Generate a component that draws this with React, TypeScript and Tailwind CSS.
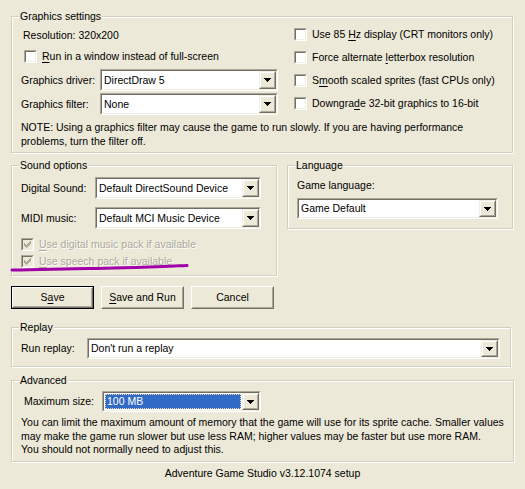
import React from "react";

/** Underlined access-key letter, as Windows draws it */
function Key({ children }: { children: React.ReactNode }) {
  return <span className="underline decoration-1 underline-offset-[2px]">{children}</span>;
}

/** Etched group box with its caption cut into the top edge */
function Group({
  title,
  className,
  children,
}: {
  title: string;
  className?: string;
  children: React.ReactNode;
}) {
  return (
    <fieldset
      className={`border border-[#D0D0BF] px-[9px] shadow-[1px_1px_0_#fff,inset_1px_1px_0_#fff] ${className ?? ""}`}
    >
      <legend className="-ml-[2px] bg-[#ECE9D8] px-[1px] leading-[13px]">{title}</legend>
      {children}
    </fieldset>
  );
}

/** Classic 13x13 sunken checkbox */
function CheckBox({ checked, disabled }: { checked?: boolean; disabled?: boolean }) {
  return (
    <span className="inline-block h-[13px] w-[13px] shrink-0 border border-t-[#ACA899] border-l-[#ACA899] border-b-white border-r-white">
      <span
        className={[
          "flex h-full w-full items-center justify-center border border-t-[#716F64] border-l-[#716F64] border-b-[#F1EFE2] border-r-[#F1EFE2]",
          disabled ? "bg-[#ECE9D8]" : "bg-white",
        ].join(" ")}
      >
        {checked && (
          <svg width="7" height="7" viewBox="0 0 7 7" shapeRendering="crispEdges">
            <path
              d="M0 2h1v3H0zM1 3h1v3H1zM2 4h1v3H2zM3 3h1v3H3zM4 2h1v3H4zM5 1h1v3H5zM6 0h1v3H6z"
              fill={disabled ? "#ACA899" : "#000"}
            />
          </svg>
        )}
      </span>
    </span>
  );
}

function CheckRow({
  children,
  checked,
  disabled,
  className,
}: {
  children: React.ReactNode;
  checked?: boolean;
  disabled?: boolean;
  className?: string;
}) {
  return (
    <div className={`flex h-[13px] items-center gap-[5px] whitespace-nowrap ${className ?? ""}`}>
      <CheckBox checked={checked} disabled={disabled} />
      <span className={disabled ? "text-[#ACA899] [text-shadow:1px_1px_0_#fff]" : ""}>{children}</span>
    </div>
  );
}

/** Raised button with the small black arrow */
function DropButton() {
  return (
    <div className="h-full w-[17px] shrink-0 border border-t-[#F1EFE2] border-l-[#F1EFE2] border-b-[#716F64] border-r-[#716F64]">
      <div className="flex h-full w-full items-center justify-center border border-t-white border-l-white border-b-[#ACA899] border-r-[#ACA899] bg-[#ECE9D8]">
        <svg width="7" height="4" viewBox="0 0 7 4" shapeRendering="crispEdges">
          <path d="M0 0h7v1H0zM1 1h5v1H1zM2 2h3v1H2zM3 3h1v1H3z" fill="#000" />
        </svg>
      </div>
    </div>
  );
}

function Combo({
  value,
  className,
  selected,
}: {
  value: string;
  className?: string;
  selected?: boolean;
}) {
  return (
    <div
      className={`shrink-0 border border-t-[#ACA899] border-l-[#ACA899] border-b-white border-r-white ${className ?? ""}`}
    >
      <div className="flex h-full border border-t-[#716F64] border-l-[#716F64] border-b-[#F1EFE2] border-r-[#F1EFE2] bg-white">
        {selected ? (
          <div className="flex min-w-0 flex-1 p-[1px]">
            <div className="flex flex-1 items-center border border-dotted border-[#E6DDB0] bg-[#316AC5] pl-[1px] text-white">
              {value}
            </div>
          </div>
        ) : (
          <div className="flex min-w-0 flex-1 items-center whitespace-nowrap pl-[2px]">{value}</div>
        )}
        <DropButton />
      </div>
    </div>
  );
}

function Button({ children, isDefault }: { children: React.ReactNode; isDefault?: boolean }) {
  return (
    <div className={`h-[23px] w-[83px] ${isDefault ? "border border-black" : ""}`}>
      <div className="h-full w-full border border-t-white border-l-white border-b-[#716F64] border-r-[#716F64]">
        <div className="flex h-full w-full items-center justify-center border border-transparent border-b-[#ACA899] border-r-[#ACA899]">
          {children}
        </div>
      </div>
    </div>
  );
}

export default function App() {
  return (
    <div className="relative h-[489px] w-[525px] overflow-hidden bg-[#ECE9D8] font-['Liberation_Sans',Arial,sans-serif] text-[10.5px] leading-[13px] text-black">
      <div className="pl-[11px] pt-[10px]">
        {/* Graphics settings */}
        <Group title="Graphics settings" className="w-[502px] pb-[4px]">
          <div className="flex">
            <div className="w-[273px]">
              <div className="mt-[6px] pl-[2px]">Resolution: 320x200</div>
              <CheckRow className="mt-[8px] pl-[3px]">
                <Key>R</Key>un in a window instead of full-screen
              </CheckRow>
              <div className="mt-[6px] flex items-center">
                <span className="w-[79px]">Graphics driver:</span>
                <Combo value="DirectDraw 5" className="h-[22px] w-[178px]" />
              </div>
              <div className="mt-[2px] flex items-center">
                <span className="w-[79px]">Graphics filter:</span>
                <Combo value="None" className="h-[22px] w-[178px]" />
              </div>
            </div>
            <div className="flex flex-col gap-[10px] pt-[5px]">
              <CheckRow>
                Use 85 <Key>H</Key>z display (CRT monitors only)
              </CheckRow>
              <CheckRow>
                Force alternate <Key>l</Key>etterbox resolution
              </CheckRow>
              <CheckRow>
                S<Key>m</Key>ooth scaled sprites (fast CPUs only)
              </CheckRow>
              <CheckRow>
                Downgra<Key>d</Key>e 32-bit graphics to 16-bit
              </CheckRow>
            </div>
          </div>
          <p className="mt-[5px] whitespace-nowrap leading-[14px]">
            NOTE: Using a graphics filter may cause the game to run slowly. If you are having performance
            <br />
            problems, turn the filter off.
          </p>
        </Group>

        {/* Sound + Language */}
        <div className="mt-[6px] flex items-start gap-[10px]">
          <Group title="Sound options" className="w-[266px] pb-[7px]">
            <div className="mt-[5px] flex items-center">
              <span className="w-[74px]">Digital Sound:</span>
              <Combo value="Default DirectSound Device" className="h-[22px] w-[166px]" />
            </div>
            <div className="mt-[8px] flex items-center">
              <span className="w-[74px]">MIDI music:</span>
              <Combo value="Default MCI Music Device" className="h-[22px] w-[166px]" />
            </div>
            <CheckRow checked disabled className="mt-[9px]">
              <Key>U</Key>se digital music pack if available
            </CheckRow>
            <CheckRow checked disabled className="mt-[4px]">
              <Key>U</Key>se speech pack if available
            </CheckRow>
          </Group>

          <Group title="Language" className="w-[226px] pb-[9px]">
            <div className="mt-[7px]">Game language:</div>
            <Combo value="Game Default" className="mt-[6px] h-[21px] w-[201px]" />
          </Group>
        </div>

        {/* Buttons */}
        <div className="mt-[10px] flex gap-[7px]">
          <Button isDefault>
            S<Key>a</Key>ve
          </Button>
          <Button>
            <Key>S</Key>ave and Run
          </Button>
          <Button>Cancel</Button>
        </div>

        {/* Replay */}
        <Group title="Replay" className="mt-[12px] w-[500px] pb-[7px]">
          <div className="mt-[4px] flex items-center">
            <span className="w-[66px]">Run replay:</span>
            <Combo value="Don't run a replay" className="h-[21px] w-[413px]" />
          </div>
        </Group>

        {/* Advanced */}
        <Group title="Advanced" className="mt-[7px] w-[500px] pb-[4px]">
          <div className="mt-[4px] flex items-center pl-[3px]">
            <span className="w-[78px]">Maximum size:</span>
            <Combo value="100 MB" selected className="h-[21px] w-[159px]" />
          </div>
          <p className="mt-[4px] whitespace-nowrap leading-[13.5px]">
            You can limit the maximum amount of memory that the game will use for its sprite cache. Smaller values
            <br />
            may make the game run slower but use less RAM; higher values may be faster but use more RAM.
            <br />
            You should not normally need to adjust this.
          </p>
        </Group>
      </div>

      <div className="mt-[5px] text-center">Adventure Game Studio v3.12.1074 setup</div>

      {/* hand-drawn purple annotation under the speech pack option */}
      <svg className="pointer-events-none absolute left-0 top-0" width="525" height="489">
        <path
          d="M12 270 C 40 270, 65 268.5, 90 268.5 S 150 267, 187 265.5"
          fill="none"
          stroke="#A000A8"
          strokeWidth="3"
          strokeLinecap="round"
        />
      </svg>
    </div>
  );
}
